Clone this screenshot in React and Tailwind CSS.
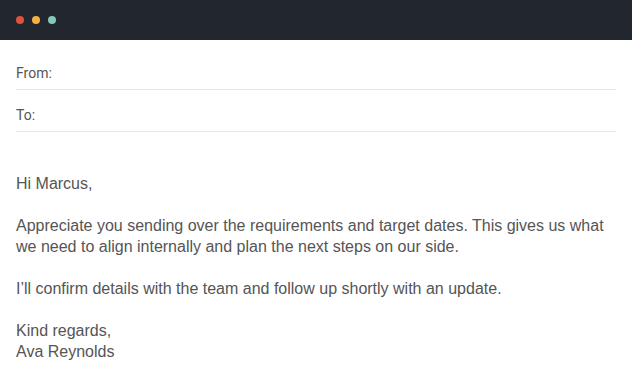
export default function App() {
  return (
    <div className="w-[632px] h-[377px] bg-white overflow-hidden font-['Liberation_Sans',Arial,sans-serif]">
      <div className="h-10 bg-[#22262e] flex items-center gap-2 px-4">
        <span className="w-2 h-2 rounded-full bg-[#e0533a]" />
        <span className="w-2 h-2 rounded-full bg-[#f5b041]" />
        <span className="w-2 h-2 rounded-full bg-[#82c9b7]" />
      </div>

      <div className="px-4 pt-2 font-['Roboto',sans-serif] text-[14px] text-[#555]">
        <div className="pt-[17px] pb-2 border-b border-[#e8e8e8] leading-4">From:</div>
        <div className="pt-[17px] pb-2 border-b border-[#e8e8e8] leading-4">To:</div>
      </div>

      <div className="px-4 pt-[41px] text-[16px] leading-[21px] text-[#555]">
        <p>Hi Marcus,</p>
        <p className="mt-[21px]">
          Appreciate you sending over the requirements and target dates. This gives us what we need to align internally and plan the next steps on our side.
        </p>
        <p className="mt-[21px]">I’ll confirm details with the team and follow up shortly with an update.</p>
        <p className="mt-[21px]">Kind regards,<br />Ava Reynolds</p>
      </div>
    </div>
  )
}
